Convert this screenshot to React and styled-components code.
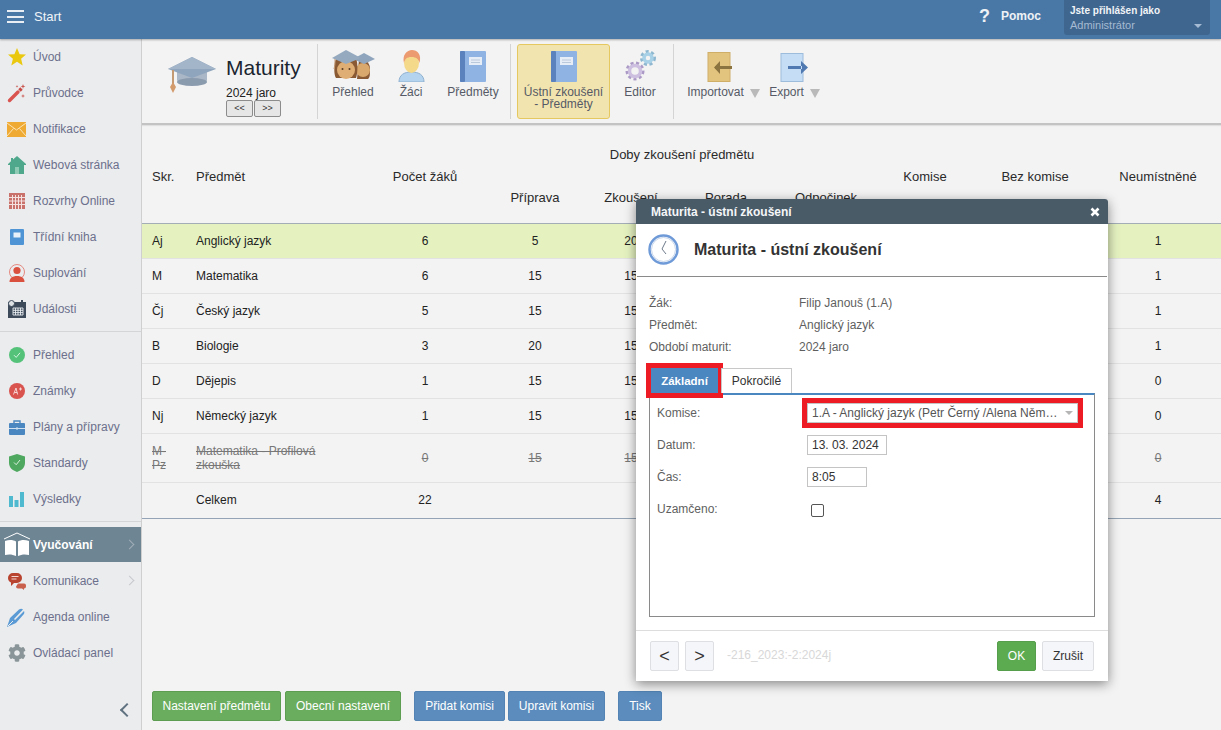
import React from "react";
import styled, { createGlobalStyle } from "styled-components";
import { FaCog } from "react-icons/fa";

const Global = createGlobalStyle`
  html, body {
    margin: 0;
    height: 100%;
    overflow: hidden;
    font-family: "Liberation Sans", Arial, sans-serif;
    font-size: 12px;
    color: #222;
    background: #f3f3f3;
  }
  * { box-sizing: border-box; }
`;

const Page = styled.div`
  position: relative;
  display: flex;
  flex-direction: column;
  height: 730px;
`;

/* top bar */
const TopBar = styled.header`
  flex: none;
  height: 39px;
  display: flex;
  align-items: flex-start;
  background: #4a78a6;
  color: #fff;
  position: relative;
  z-index: 2;
  box-shadow: 0 1px 2px rgba(0, 0, 0, 0.3);
`;

const Burger = styled.div`
  width: 17px;
  margin: 10px 10px 0 7px;
  height: 13px;
  border-top: 2px solid #e8eef4;
  border-bottom: 2px solid #e8eef4;
  position: relative;
  &::after {
    content: "";
    position: absolute;
    left: 0;
    right: 0;
    top: 3.5px;
    height: 2px;
    background: #e8eef4;
  }
`;

const StartText = styled.span`
  line-height: 33px;
  font-size: 13px;
  color: #f0f4f8;
`;

const HelpBox = styled.div`
  margin-left: auto;
  display: flex;
  align-items: center;
  height: 32px;
  margin-right: 23px;
  font-weight: 700;
  color: #eef2f6;
`;

const HelpMark = styled.span`
  font-size: 18px;
  margin-right: 11px;
`;

const UserBox = styled.div`
  width: 146px;
  height: 35px;
  margin-right: 11px;
  padding: 4px 6px;
  background: #3f668e;
  border-radius: 0 0 3px 3px;
  position: relative;
  line-height: 14px;
`;

const UserTop = styled.div`
  font-size: 10px;
  font-weight: 700;
  color: #f2f5f8;
`;

const UserName = styled.div`
  font-size: 11px;
  color: #a5bad3;
`;

const UserArrow = styled.span`
  position: absolute;
  right: 8px;
  top: 24px;
  border: 4px solid transparent;
  border-top: 4px solid #a5bad3;
`;

const Body = styled.div`
  flex: 1;
  display: flex;
  min-height: 0;
`;

/* left menu */
const Side = styled.nav`
  flex: none;
  width: 142px;
  background: #ebecee;
  border-right: 1px solid #cfcfcf;
  display: flex;
  flex-direction: column;
  position: relative;
`;

const SideItem = styled.div`
  height: ${(p) => (p.$active ? "35px" : "36px")};
  margin-bottom: ${(p) => (p.$active ? "1px" : "0")};
  display: flex;
  align-items: center;
  position: relative;
  color: ${(p) => (p.$active ? "#fff" : "#6c708c")};
  background: ${(p) => (p.$active ? "#6e8594" : "transparent")};
  font-weight: ${(p) => (p.$active ? 700 : 400)};
  font-size: 12px;
`;

const SideIcon = styled.span`
  width: 33px;
  flex: none;
  display: flex;
  justify-content: center;
  svg { display: block; }
`;

const SideChevron = styled.span`
  position: absolute;
  right: 8px;
  top: 50%;
  width: 7px;
  height: 7px;
  margin-top: -4px;
  border-top: 1px solid ${(p) => (p.$active ? "#9fadb7" : "#c6c9cd")};
  border-right: 1px solid ${(p) => (p.$active ? "#9fadb7" : "#c6c9cd")};
  transform: rotate(45deg);
`;

const SideRule = styled.div`
  height: 1px;
  background: #d4d5d7;
  margin: 4px 0 5px;
`;

const Collapse = styled.span`
  position: absolute;
  left: 122px;
  top: 666px;
  width: 10px;
  height: 10px;
  border-left: 2px solid #5f7280;
  border-bottom: 2px solid #5f7280;
  transform: rotate(45deg);
`;

/* main */
const Main = styled.main`
  flex: 1;
  min-width: 0;
  display: flex;
  flex-direction: column;
`;

const Toolbar = styled.div`
  flex: none;
  height: 86px;
  display: flex;
  align-items: flex-start;
  padding-top: 5px;
  background: #f3f3f3;
  border-bottom: 2px solid #c3c3c3;
  box-shadow: 0 1px 1px rgba(0, 0, 0, 0.08);
`;

const ToolGroup = styled.div`
  height: 75px;
  display: flex;
  align-items: flex-start;
  padding: ${(p) => p.$pad || "0"};
  gap: ${(p) => p.$gap || 0}px;
  width: ${(p) => p.$w}px;
  border-right: ${(p) => (p.$noRule ? "none" : "1px solid #d4d4d4")};
`;

const Brand = styled.div`
  display: flex;
  padding: 13px 0 0 26px;
`;

const BrandText = styled.div`
  margin: -2px 0 0 10px;
`;

const BrandTitle = styled.div`
  font-size: 21px;
  line-height: 25px;
  color: #1b2530;
`;

const BrandYear = styled.div`
  font-size: 12px;
  line-height: 14px;
  margin-top: 6px;
  color: #222;
`;

const PagerRow = styled.div`
  display: flex;
  gap: 1px;
`;

const Pager = styled.button`
  width: 27px;
  height: 17px;
  padding: 0 0 2px;
  font: 9px "Liberation Sans", Arial, sans-serif;
  color: #333;
  background: #e6e6e6;
  border: 1px solid #8c8c8c;
  border-radius: 2px;
`;

const Tool = styled.div`
  display: flex;
  flex-direction: column;
  align-items: center;
  text-align: center;
  height: 75px;
  padding-top: ${(p) => (p.$active ? "5px" : "6px")};
  width: ${(p) => p.$w}px;
  color: #555a66;
  font-size: 12px;
  line-height: 12px;
  background: ${(p) => (p.$active ? "#f2e4ae" : "transparent")};
  border: ${(p) => (p.$active ? "1px solid #e6c860" : "none")};
  border-radius: 3px;
`;

const ToolIcon = styled.div`
  height: 32px;
  margin-bottom: 4px;
  display: flex;
  justify-content: center;
  align-items: flex-end;
  svg { display: block; }
`;

const ToolLabel = styled.div`
  display: flex;
  align-items: center;
  white-space: nowrap;
  line-height: 12px;
`;

const DropMark = styled.span`
  width: 0;
  height: 0;
  margin: 2px 0 0 6px;
  border-left: 5px solid transparent;
  border-right: 5px solid transparent;
  border-top: 9px solid #b9b9b9;
`;

/* table */
const TableArea = styled.div`
  flex: 1;
  min-height: 0;
`;

const Table = styled.table`
  width: 100%;
  table-layout: fixed;
  border-collapse: collapse;
  border-bottom: 1px solid #94a3b5;
  font-size: 12px;
  color: #222;
`;

const Head = styled.th`
  font-weight: 400;
  font-size: 13px;
  padding: ${(p) => p.$pad || "6px 0 0"};
  text-align: ${(p) => (p.$left ? "left" : "center")};
  padding-left: ${(p) => (p.$left ? "10px" : undefined)};
  color: #2a2a2a;
`;

const HeadTop = styled.tr`
  height: 58px;
`;

const HeadSub = styled.tr`
  height: 40px;
  border-bottom: 1px solid #a3adb6;
  th { padding: 0 0 10px; }
`;

const Row = styled.tr`
  height: ${(p) => p.$h || 35}px;
  border-bottom: 1px solid #e2e2e2;
  background: ${(p) => (p.$on ? "#e5f2c0" : "transparent")};
  text-decoration: ${(p) => (p.$off ? "line-through" : "none")};
  color: ${(p) => (p.$off ? "#777" : "#222")};
  &:last-child { border-bottom: none; }
`;

const Cell = styled.td`
  padding: 0;
  padding-left: ${(p) => (p.$left ? "10px" : p.$shift || "0")};
  text-align: ${(p) => (p.$left ? "left" : "center")};
  line-height: 14px;
`;

/* bottom buttons */
const BottomBar = styled.div`
  flex: none;
  display: flex;
  padding: 0 0 9px 10px;
`;

const BarButton = styled.button`
  height: 30px;
  width: ${(p) => p.$w}px;
  margin-right: ${(p) => p.$after || 0}px;
  padding: 0;
  white-space: nowrap;
  border: 1px solid ${(p) => (p.$green ? "#5d9d52" : "#5283b4")};
  border-radius: 2px;
  background: ${(p) => (p.$green ? "#6aad5e" : "#5b8cbd")};
  color: #fff;
  font: 12px "Liberation Sans", Arial, sans-serif;
`;

/* dialog */
const Dialog = styled.section`
  position: absolute;
  left: 636px;
  top: 199px;
  width: 472px;
  height: 482px;
  background: #fff;
  border-radius: 3px 3px 0 0;
  box-shadow: 0 3px 12px rgba(0, 0, 0, 0.45);
  z-index: 5;
  display: flex;
  flex-direction: column;
`;

const DialogBar = styled.div`
  height: 25px;
  flex: none;
  background: #4a5b68;
  color: #f4f6f8;
  font-weight: 700;
  font-size: 12px;
  padding: 0 8px 0 15px;
  display: flex;
  align-items: center;
  justify-content: space-between;
  border-radius: 3px 3px 0 0;
`;

const DialogHead = styled.div`
  height: 53px;
  flex: none;
  display: flex;
  align-items: center;
  padding: 0 0 1px 11px;
  border-bottom: 1px solid #8a8a8a;
  margin: 0 1px;
`;

const DialogTitle = styled.h2`
  margin: 0 0 0 15px;
  font-size: 16px;
  font-weight: 700;
  color: #333;
`;

const InfoList = styled.div`
  padding: 15px 13px 0;
  height: 91px;
  flex: none;
`;

const InfoRow = styled.div`
  display: grid;
  grid-template-columns: 150px 1fr;
  line-height: 22px;
  color: #5f5f5f;
`;

const TabRow = styled.div`
  display: flex;
  height: 25px;
  flex: none;
  padding-left: 15px;
`;

const Tab = styled.div`
  height: 25px;
  width: ${(p) => p.$w}px;
  margin-right: 3px;
  display: flex;
  align-items: center;
  justify-content: center;
  font-weight: ${(p) => (p.$on ? 700 : 400)};
  font-size: ${(p) => (p.$on ? "11.5px" : "12px")};
  color: ${(p) => (p.$on ? "#fff" : "#333")};
  background: ${(p) => (p.$on ? "#4a86bf" : "#fff")};
  border: 1px solid ${(p) => (p.$on ? "#4a86bf" : "#c8c8c8")};
  border-bottom: none;
  position: relative;
  z-index: 1;
  outline: ${(p) => (p.$on ? "5px solid #ed1c24" : "none")};
`;

const Panel = styled.div`
  height: 224px;
  flex: none;
  margin: 0 13px;
  border: 1px solid #8a8a8a;
  border-top: 2px solid #4a86bf;
  padding: 8px 7px 0;
  display: grid;
  grid-auto-rows: 20px;
  row-gap: 12px;
`;

const FormRow = styled.div`
  display: grid;
  grid-template-columns: 150px 1fr;
  align-items: center;
  color: #5f5f5f;
`;

const Field = styled.div`
  height: 20px;
  width: ${(p) => p.$w}px;
  border: 1px solid #c4c4c4;
  padding-left: 4px;
  line-height: 18px;
  color: #333;
  background: #fff;
`;

const SelectWrap = styled.div`
  width: 271px;
  height: 20px;
  outline: 5px solid #ed1c24;
  position: relative;
  &::after {
    content: "";
    position: absolute;
    right: 5px;
    top: 8px;
    border: 4px solid transparent;
    border-top: 4px solid #b5b5b5;
  }
`;

const SelectField = styled(Field)`
  width: 100%;
  white-space: nowrap;
  overflow: hidden;
  text-overflow: ellipsis;
  padding-right: 15px;
  color: #555;
`;

const Check = styled.span`
  display: block;
  width: 13px;
  height: 13px;
  margin: 2px 0 0 4px;
  border: 1px solid #555;
  border-radius: 2px;
  background: #fff;
`;

const DialogFoot = styled.footer`
  margin-top: 13px;
  flex: 1;
  border-top: 1px solid #ddd;
  display: flex;
  align-items: flex-start;
  padding: 10px 14px 0;
`;

const FootButton = styled.button`
  height: 30px;
  width: ${(p) => p.$w}px;
  margin-left: ${(p) => p.$before || 0}px;
  padding: 0;
  border: 1px solid ${(p) => (p.$ok ? "#569e4b" : "#dedfe3")};
  border-radius: 2px;
  background: ${(p) => (p.$ok ? "#5dab50" : "#f5f6f9")};
  color: ${(p) => (p.$ok ? "#fff" : "#333")};
  font: ${(p) => (p.$big ? "18px" : "12px")} "Liberation Sans", Arial, sans-serif;
`;

const FootCode = styled.span`
  margin-left: 13px;
  flex: 1;
  line-height: 29px;
  color: #d8d8d8;
`;

/* drawings */
const Star = () => (
  <svg width="20" height="20" viewBox="0 0 20 20">
    <polygon points="10,1 12.6,7.2 19,7.6 14.1,11.8 15.7,18.4 10,14.8 4.3,18.4 5.9,11.8 1,7.6 7.4,7.2" fill="#eac80f" />
  </svg>
);
const Wand = () => (
  <svg width="20" height="20" viewBox="0 0 20 20">
    <path d="M2.5 17.5 11 9" stroke="#d9534f" strokeWidth="3.4" strokeLinecap="round" />
    <path d="M12.5 7.5 14.5 5.5" stroke="#c94a45" strokeWidth="3.4" />
    <path d="M16 1l.6 1.800 1.800.6-1.800.6L16 6l-.6-2-1.800-.6 1.800-.6zM16 11l.5 1.400 1.500.5-1.500.5-.5 1.600-.5-1.600-1.500-.5 1.500-.5zM10 2l.4 1 1 .4-1 .4-.4 1-.4-1-1-.4 1-.4z" fill="#c9574f" />
  </svg>
);
const Mail = () => (
  <svg width="19" height="15" viewBox="0 0 19 15">
    <rect width="19" height="15" fill="#eeaa33" />
    <path d="M0 1l9.500 7L19 1M0 14l6.500-7.500M19 14l-6.500-7.500" stroke="#fbe3b5" strokeWidth="1" fill="none" />
  </svg>
);
const Home = () => (
  <svg width="18" height="18" viewBox="0 0 18 18">
    <path d="M9 0 18 8v1h-2v9H2V9H0V8l3-2.700V2h2v1.500z" fill="#4fa88b" />
    <rect x="7" y="11" width="4" height="7" fill="#8fcab5" />
  </svg>
);
const Grid = () => (
  <svg width="16" height="16" viewBox="0 0 16 16">
    <rect width="16" height="16" fill="#c9716b" />
    <path d="M0 4.500h16M0 8h16M0 11.500h16M3.500 2v14M6.500 2v14M9.500 2v14M12.500 2v14" stroke="#f3e2df" strokeWidth="1" />
  </svg>
);
const NoteBook = () => (
  <svg width="14" height="16" viewBox="0 0 14 16">
    <rect width="14" height="16" rx="1" fill="#4f94d4" />
    <rect x="3.500" y="3.500" width="7" height="5" fill="#e8f1fa" />
  </svg>
);
const Swap = () => (
  <svg width="18" height="18" viewBox="0 0 18 18">
    <circle cx="9" cy="8" r="7.500" fill="none" stroke="#e58a80" strokeWidth="1" />
    <circle cx="9" cy="6.500" r="3.600" fill="#d9503f" />
    <path d="M1.500 18c0-4 3-6 7.500-6s7.500 2 7.500 6z" fill="#d9503f" />
  </svg>
);
const Events = () => (
  <svg width="18" height="18" viewBox="0 0 18 18">
    <rect y="2" width="18" height="16" fill="#3c4a5a" />
    <path d="M5 8h10v7H5zM5 10.300h10M5 12.600h10M7.500 8v7M10 8v7M12.500 8v7" stroke="#e9edf0" strokeWidth="0.9" fill="none" />
    <circle cx="3.500" cy="3.500" r="3" fill="#dfe3e6" stroke="#3c4a5a" />
    <rect x="13" y="0" width="2" height="4" fill="#3c4a5a" />
  </svg>
);
const Tick = ({ color }) => (
  <svg width="16" height="16" viewBox="0 0 16 16">
    <circle cx="8" cy="8" r="8" fill={color} />
    <path d="M5 8.200 7.200 10.400 11 5.800" stroke="#d8f5e2" strokeWidth="1" fill="none" />
  </svg>
);
const Grade = () => (
  <svg width="16" height="16" viewBox="0 0 16 16">
    <circle cx="8" cy="8" r="8" fill="#d9534f" />
    <path d="M4.500 11.500 7 5l1.600 6.500M5.400 9.500h2.800M10 6h3M11.500 4.500v3" stroke="#f6d5d2" strokeWidth="1" fill="none" />
  </svg>
);
const Case = () => (
  <svg width="16" height="15" viewBox="0 0 16 15">
    <path d="M5 3V1h6v2" stroke="#4a86bf" strokeWidth="1.400" fill="none" />
    <rect y="3" width="16" height="12" rx="1" fill="#4a86bf" />
    <path d="M0 8.500h16" stroke="#cfe0f0" strokeWidth="1" />
    <rect x="7" y="7.500" width="2" height="2" fill="#cfe0f0" />
  </svg>
);
const Shield = () => (
  <svg width="16" height="18" viewBox="0 0 16 18">
    <path d="M8 0 16 2.500V9c0 4.500-3.500 7.500-8 9-4.500-1.500-8-4.500-8-9V2.500z" fill="#4fa860" />
    <path d="M5 8.500 7.200 10.700 11 6" stroke="#d8f0dc" strokeWidth="1" fill="none" />
  </svg>
);
const Bars = () => (
  <svg width="15" height="15" viewBox="0 0 15 15">
    <path d="M0 4h4v11H0zM5.500 8h4v7h-4zM11 0h4v15h-4z" fill="#4fb9cf" />
  </svg>
);
const OpenBook = () => (
  <svg width="28" height="26" viewBox="0 0 28 26">
    <path d="M1 7 14 1l13 6" stroke="#fff" strokeWidth="1" fill="none" />
    <path d="M2 9c4-1.500 8-1.500 11 .5V24c-3-1.500-7-2-11-1zM26 9c-4-1.500-8-1.500-11 .5V24c3-1.500 7-2 11-1z" fill="#fff" />
  </svg>
);
const Bubbles = () => (
  <svg width="18" height="17" viewBox="0 0 18 17">
    <path d="M5 0h4a5 5 0 0 1 5 5 5 5 0 0 1-5 5H6l-3 3v-3.500A5 5 0 0 1 0 5a5 5 0 0 1 5-5z" fill="#b8432f" />
    <path d="M3.500 3.500h7M3.500 6h5" stroke="#f4d7d2" strokeWidth="1" />
    <path d="M10 10.500h6a2 2 0 0 1 2 2v1a2 2 0 0 1-2 2v1.500l-2-1.500h-4a2 2 0 0 1-2-2z" fill="#c9604e" />
  </svg>
);
const Pen = () => (
  <svg width="19" height="19" viewBox="0 0 19 19">
    <path d="M0 19 3 10 12 1.500c1.500-1 3-1 4 0L7 11l1 1 9-9c.5 1 .5 2.500-.5 3.500L9 15z" fill="#5b9bd5" />
    <path d="M1 18 6 13" stroke="#ebecee" strokeWidth="1" />
  </svg>
);

const Cap = () => (
  <svg width="48" height="37" viewBox="0 0 48 37">
    <path d="M9 15v8c0 3 7 5 15 5s15-2 15-5v-8z" fill="#aab7c6" />
    <ellipse cx="24" cy="25" rx="15" ry="4" fill="#8b9bae" />
    <polygon points="24,0 48,12 24,21 0,12" fill="#8fa5bd" />
    <polygon points="24,0 48,12 24,12 0,12" fill="#a3b5c9" />
    <path d="M5 13v15" stroke="#c49a73" strokeWidth="2" />
    <path d="M5 25l3 5-3 6-3-6z" fill="#d39a6c" />
  </svg>
);
const Pupils = () => (
  <svg width="43" height="32" viewBox="0 0 43 32">
    <path d="M27 10c7-1 11 3 11 9s0 8-2 10H25z" fill="#8a5a35" />
    <circle cx="31" cy="20" r="7" fill="#d9a86c" />
    <polygon points="32,3 43,9 32,14 21,9" fill="#8fa5bd" />
    <path d="M3 12c0-4 6-5 11-5s11 1 11 5c1 6 0 14-1 16H4C2 25 2 18 3 12z" fill="#8a5a35" />
    <circle cx="14" cy="20" r="9" fill="#dfae74" />
    <circle cx="10.500" cy="19" r="1" fill="#5a3b22" />
    <circle cx="17.500" cy="19" r="1" fill="#5a3b22" />
    <polygon points="14,0 29,8 14,14 0,8" fill="#95a9bf" />
    <path d="M3 9c0 5 0 6-1 10" stroke="#c49a73" strokeWidth="1" fill="none" />
  </svg>
);
const Pupil = () => (
  <svg width="27" height="32" viewBox="0 0 27 32">
    <path d="M1 32c0-7 5-10 12.500-10S26 25 26 32z" fill="#b3d3ef" stroke="#8fb0cf" />
    <ellipse cx="13.500" cy="13" rx="7.500" ry="10" fill="#f5d98a" />
    <path d="M6 13C4 5 9 0 14 0s10 4 7.500 13c-1-4-3-6-8-6s-6.500 2-7.500 6z" fill="#ec9a6f" />
  </svg>
);
const BigBook = () => (
  <svg width="26" height="31" viewBox="0 0 26 31">
    <rect width="26" height="31" rx="1" fill="#8fb3e3" />
    <rect width="5" height="31" rx="1" fill="#5b82bd" />
    <rect x="9" y="6" width="13" height="8" fill="#e6edf6" />
    <path d="M11 9h9M11 11.500h9" stroke="#b9c8da" strokeWidth="1" />
  </svg>
);
const Gear = ({ cx, cy, r, fill, line }) => (
  <g>
    <circle cx={cx} cy={cy} r={r} fill="none" stroke={line} strokeWidth="3" strokeDasharray="3 2.500" />
    <circle cx={cx} cy={cy} r={r - 2.5} fill="none" stroke={fill} strokeWidth="3.500" />
  </g>
);
const Gears = () => (
  <svg width="31" height="32" viewBox="0 0 31 32">
    <Gear cx={23} cy={8} r={6.5} fill="#a8d0e6" line="#8fb8d0" />
    <Gear cx={10} cy={21} r={8} fill="#cdbfe0" line="#ab9ac6" />
  </svg>
);
const ImportIcon = () => (
  <svg width="33" height="30" viewBox="0 0 33 30">
    <rect x="1" y="0.500" width="22" height="29" fill="#e3c47e" stroke="#cfae68" />
    <path d="M8 14h17v3H8zM13 9v13L7 15.500z" fill="#8c7440" />
  </svg>
);
const ExportIcon = () => (
  <svg width="30" height="29" viewBox="0 0 30 29">
    <rect x="1" y="0.500" width="22" height="28" fill="#c5def5" stroke="#9dbbdb" />
    <path d="M8 13h14v3H8zM21 8v13l7-6.500z" fill="#4f79b0" />
  </svg>
);
const Clock = () => (
  <svg width="31" height="31" viewBox="0 0 31 31">
    <circle cx="15.500" cy="15.500" r="14" fill="#fff" stroke="#6f9ad8" strokeWidth="2.500" />
    <circle cx="15.500" cy="15.500" r="12" fill="none" stroke="#c8d6ea" strokeWidth="1" />
    <path d="M18 7 14 15 18 20" stroke="#6d7a8a" strokeWidth="1" fill="none" />
  </svg>
);

const menuTop = [
  ["Úvod", <Star />],
  ["Průvodce", <Wand />],
  ["Notifikace", <Mail />],
  ["Webová stránka", <Home />],
  ["Rozvrhy Online", <Grid />],
  ["Třídní kniha", <NoteBook />],
  ["Suplování", <Swap />],
  ["Události", <Events />],
];
const menuMid = [
  ["Přehled", <Tick color="#55c27a" />],
  ["Známky", <Grade />],
  ["Plány a přípravy", <Case />],
  ["Standardy", <Shield />],
  ["Výsledky", <Bars />],
];

const rows = [
  { k: "aj", s: "Aj", n: "Anglický jazyk", c: "6", p: "5", z: "20", u: "1", on: true },
  { k: "m", s: "M", n: "Matematika", c: "6", p: "15", z: "15", u: "1" },
  { k: "cj", s: "Čj", n: "Český jazyk", c: "5", p: "15", z: "15", u: "1" },
  { k: "b", s: "B", n: "Biologie", c: "3", p: "20", z: "15", u: "1" },
  { k: "d", s: "D", n: "Dějepis", c: "1", p: "15", z: "15", u: "0" },
  { k: "nj", s: "Nj", n: "Německý jazyk", c: "1", p: "15", z: "15", u: "0" },
  {
    k: "mpz",
    s: <>M-<br />Pz</>,
    n: <>Matematika - Profilová<br />zkouška</>,
    c: "0",
    p: "15",
    z: "15",
    u: "0",
    off: true,
    h: 49,
  },
  { k: "sum", s: "", n: "Celkem", c: "22", p: "", z: "", u: "4", h: 36 },
];

const SideRow = ({ label, icon, active, more }) => (
  <SideItem $active={active}>
    <SideIcon>{icon}</SideIcon>
    {label}
    {more && <SideChevron $active={active} />}
  </SideItem>
);

export default function App() {
  return (
    <Page>
      <Global />
      <TopBar>
        <Burger />
        <StartText>Start</StartText>
        <HelpBox>
          <HelpMark>?</HelpMark>
          Pomoc
        </HelpBox>
        <UserBox>
          <UserTop>Jste přihlášen jako</UserTop>
          <UserName>Administrátor</UserName>
          <UserArrow />
        </UserBox>
      </TopBar>
      <Body>
        <Side>
          {menuTop.map(([label, icon]) => (
            <SideRow key={label} label={label} icon={icon} />
          ))}
          <SideRule />
          {menuMid.map(([label, icon]) => (
            <SideRow key={label} label={label} icon={icon} />
          ))}
          <SideRule />
          <SideRow label="Vyučování" icon={<OpenBook />} active more />
          <SideRow label="Komunikace" icon={<Bubbles />} more />
          <SideRow label="Agenda online" icon={<Pen />} />
          <SideRow label="Ovládací panel" icon={<FaCog size={18} color="#8a9599" />} />
          <Collapse />
        </Side>
        <Main>
          <Toolbar>
            <ToolGroup $w={176}>
              <Brand>
                <Cap />
                <BrandText>
                  <BrandTitle>Maturity</BrandTitle>
                  <BrandYear>2024 jaro</BrandYear>
                  <PagerRow>
                    <Pager>&lt;&lt;</Pager>
                    <Pager>&gt;&gt;</Pager>
                  </PagerRow>
                </BrandText>
              </Brand>
            </ToolGroup>
            <ToolGroup $w={193} $pad="0 0 0 14px" $gap={24}>
              <Tool $w={42}>
                <ToolIcon><Pupils /></ToolIcon>
                Přehled
              </Tool>
              <Tool $w={26}>
                <ToolIcon><Pupil /></ToolIcon>
                Žáci
              </Tool>
              <Tool $w={50}>
                <ToolIcon><BigBook /></ToolIcon>
                Předměty
              </Tool>
            </ToolGroup>
            <ToolGroup $w={163} $pad="0 0 0 6px" $gap={14}>
              <Tool $w={93} $active>
                <ToolIcon><BigBook /></ToolIcon>
                Ústní zkoušení
                <br />- Předměty
              </Tool>
              <Tool $w={32}>
                <ToolIcon><Gears /></ToolIcon>
                Editor
              </Tool>
            </ToolGroup>
            <ToolGroup $w={200} $pad="0 0 0 13px" $gap={10} $noRule>
              <Tool $w={73}>
                <ToolIcon><ImportIcon /></ToolIcon>
                <ToolLabel>Importovat<DropMark /></ToolLabel>
              </Tool>
              <Tool $w={49}>
                <ToolIcon><ExportIcon /></ToolIcon>
                <ToolLabel>Export<DropMark /></ToolLabel>
              </Tool>
            </ToolGroup>
          </Toolbar>
          <TableArea>
            <Table>
              <colgroup>
                <col width="44" />
                <col width="187" />
                <col width="104" />
                <col width="116" />
                <col width="76" />
                <col width="114" />
                <col width="86" />
                <col width="112" />
                <col width="108" />
                <col width="132" />
              </colgroup>
              <thead>
                <HeadTop>
                  <Head $left rowSpan={2}>Skr.</Head>
                  <Head $left rowSpan={2}>Předmět</Head>
                  <Head rowSpan={2}>Počet žáků</Head>
                  <Head colSpan={4} $pad="0 0 0 18px">Doby zkoušení předmětu</Head>
                  <Head rowSpan={2}>Komise</Head>
                  <Head rowSpan={2}>Bez komise</Head>
                  <Head rowSpan={2} $pad="6px 0 0 6px">Neumístněné</Head>
                </HeadTop>
                <HeadSub>
                  <Head>Příprava</Head>
                  <Head>Zkoušení</Head>
                  <Head>Porada</Head>
                  <Head>Odpočinek</Head>
                </HeadSub>
              </thead>
              <tbody>
                {rows.map((r) => (
                  <Row key={r.k} $on={r.on} $off={r.off} $h={r.h}>
                    <Cell $left>{r.s}</Cell>
                    <Cell $left>{r.n}</Cell>
                    <Cell>{r.c}</Cell>
                    <Cell>{r.p}</Cell>
                    <Cell>{r.z}</Cell>
                    <Cell />
                    <Cell />
                    <Cell />
                    <Cell />
                    <Cell $shift="6px">{r.u}</Cell>
                  </Row>
                ))}
              </tbody>
            </Table>
          </TableArea>
          <BottomBar>
            <BarButton $green $w={129} $after={4}>Nastavení předmětu</BarButton>
            <BarButton $green $w={116} $after={13}>Obecní nastavení</BarButton>
            <BarButton $w={91} $after={3}>Přidat komisi</BarButton>
            <BarButton $w={97} $after={13}>Upravit komisi</BarButton>
            <BarButton $w={44}>Tisk</BarButton>
          </BottomBar>
        </Main>
      </Body>
      <Dialog>
        <DialogBar>
          Maturita - ústní zkoušení
          <svg width="10" height="10" viewBox="0 0 10 10">
            <path d="M1.500 1.500l7 7M8.500 1.500l-7 7" stroke="#fff" strokeWidth="2.600" />
          </svg>
        </DialogBar>
        <DialogHead>
          <Clock />
          <DialogTitle>Maturita - ústní zkoušení</DialogTitle>
        </DialogHead>
        <InfoList>
          <InfoRow><span>Žák:</span><span>Filip Janouš (1.A)</span></InfoRow>
          <InfoRow><span>Předmět:</span><span>Anglický jazyk</span></InfoRow>
          <InfoRow><span>Období maturit:</span><span>2024 jaro</span></InfoRow>
        </InfoList>
        <TabRow>
          <Tab $on $w={67}>Základní</Tab>
          <Tab $w={71}>Pokročilé</Tab>
        </TabRow>
        <Panel>
          <FormRow>
            <span>Komise:</span>
            <SelectWrap>
              <SelectField>1.A - Anglický jazyk (Petr Černý /Alena Němcová)</SelectField>
            </SelectWrap>
          </FormRow>
          <FormRow>
            <span>Datum:</span>
            <Field $w={80}>13. 03. 2024</Field>
          </FormRow>
          <FormRow>
            <span>Čas:</span>
            <Field $w={60}>8:05</Field>
          </FormRow>
          <FormRow>
            <span>Uzamčeno:</span>
            <Check />
          </FormRow>
        </Panel>
        <DialogFoot>
          <FootButton $w={29} $big>&lt;</FootButton>
          <FootButton $w={29} $before={6} $big>&gt;</FootButton>
          <FootCode>-216_2023:-2:2024j</FootCode>
          <FootButton $w={39} $ok>OK</FootButton>
          <FootButton $w={52} $before={6}>Zrušit</FootButton>
        </DialogFoot>
      </Dialog>
    </Page>
  );
}
